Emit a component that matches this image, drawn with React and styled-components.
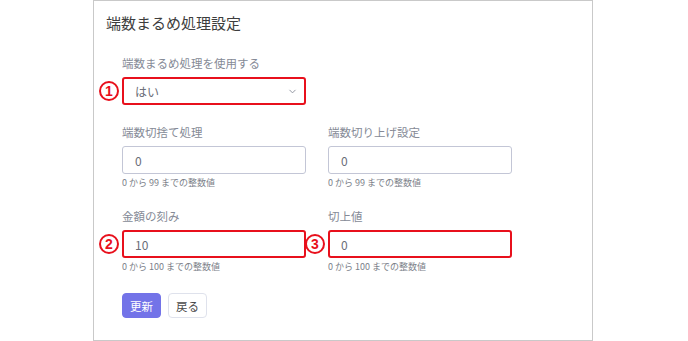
import React from 'react';
import styled, { createGlobalStyle } from 'styled-components';
import { ChevronDown } from 'lucide-react';

const Global = createGlobalStyle`
  html, body {
    margin: 0;
    padding: 0;
    background: #fff;
  }
  body {
    font-family: "Noto Sans CJK JP", "Noto Sans", sans-serif;
  }
`;

const Card = styled.div`
  box-sizing: border-box;
  margin-left: 93px;
  width: 500px;
  height: 341px;
  border: 1px solid #c9c9c9;
  padding: 12px 12px 0;
`;

const Title = styled.h2`
  margin: 0;
  font-size: 15px;
  line-height: 20px;
  font-weight: 400;
  color: #3d3d3d;
`;

const Form = styled.div`
  margin-top: 22px;
  padding-left: 16px;
  display: grid;
  grid-template-columns: 184px 184px;
  column-gap: 22px;
  row-gap: 19px;
`;

const Field = styled.div`
  display: flex;
  flex-direction: column;
`;

const Label = styled.label`
  font-size: 11.5px;
  line-height: 16px;
  color: #858a96;
  margin-bottom: 6px;
`;

const Control = styled.div`
  position: relative;
  box-sizing: border-box;
  height: 28px;
  border: ${p => (p.$marked ? '2px solid #e8101c' : '1px solid #c3c6d6')};
  border-radius: 3px;
  display: flex;
  align-items: center;
  padding-left: ${p => (p.$marked ? '11px' : '12px')};
  padding-right: 6px;
  font-size: 12px;
  color: #6a6d78;
  background: #fff;
`;

const Value = styled.span`
  flex: 1;
`;

const Marker = styled.span`
  position: absolute;
  left: -25px;
  top: 50%;
  transform: translateY(-50%);
  box-sizing: border-box;
  width: 20px;
  height: 20px;
  border: 2px solid #e8101c;
  border-radius: 50%;
  display: flex;
  align-items: center;
  justify-content: center;
  font-family: "Liberation Sans", sans-serif;
  font-size: 14px;
  font-weight: 700;
  color: #e8101c;
  line-height: 1;
`;

const Help = styled.div`
  margin-top: 3px;
  font-size: 9px;
  line-height: 12px;
  color: #7b7f89;
`;

const Actions = styled.div`
  grid-column: 1 / 3;
  display: flex;
  gap: 7px;
  margin-top: 1px;
`;

const Button = styled.button`
  box-sizing: border-box;
  width: 39px;
  height: 25px;
  border-radius: 4px;
  font-family: inherit;
  font-size: 11.5px;
  padding: 0;
  border: 1px solid ${p => (p.$primary ? '#7373e8' : '#dfe2ec')};
  background: ${p => (p.$primary ? '#7373e8' : '#fff')};
  color: ${p => (p.$primary ? '#fff' : '#4a4a4a')};
`;

const Spacer = styled.div``;

export default function App() {
  return (
    <>
      <Global />
      <Card>
        <Title>端数まるめ処理設定</Title>
        <Form>
          <Field>
            <Label>端数まるめ処理を使用する</Label>
            <Control $marked>
              <Marker>1</Marker>
              <Value>はい</Value>
              <ChevronDown size={11} color="#8a8e9a" strokeWidth={2} />
            </Control>
          </Field>
          <Spacer />

          <Field>
            <Label>端数切捨て処理</Label>
            <Control>
              <Value>0</Value>
            </Control>
            <Help>0 から 99 までの整数値</Help>
          </Field>
          <Field>
            <Label>端数切り上げ設定</Label>
            <Control>
              <Value>0</Value>
            </Control>
            <Help>0 から 99 までの整数値</Help>
          </Field>

          <Field>
            <Label>金額の刻み</Label>
            <Control $marked>
              <Marker>2</Marker>
              <Value>10</Value>
            </Control>
            <Help>0 から 100 までの整数値</Help>
          </Field>
          <Field>
            <Label>切上値</Label>
            <Control $marked>
              <Marker>3</Marker>
              <Value>0</Value>
            </Control>
            <Help>0 から 100 までの整数値</Help>
          </Field>

          <Actions>
            <Button $primary>更新</Button>
            <Button>戻る</Button>
          </Actions>
        </Form>
      </Card>
    </>
  );
}
